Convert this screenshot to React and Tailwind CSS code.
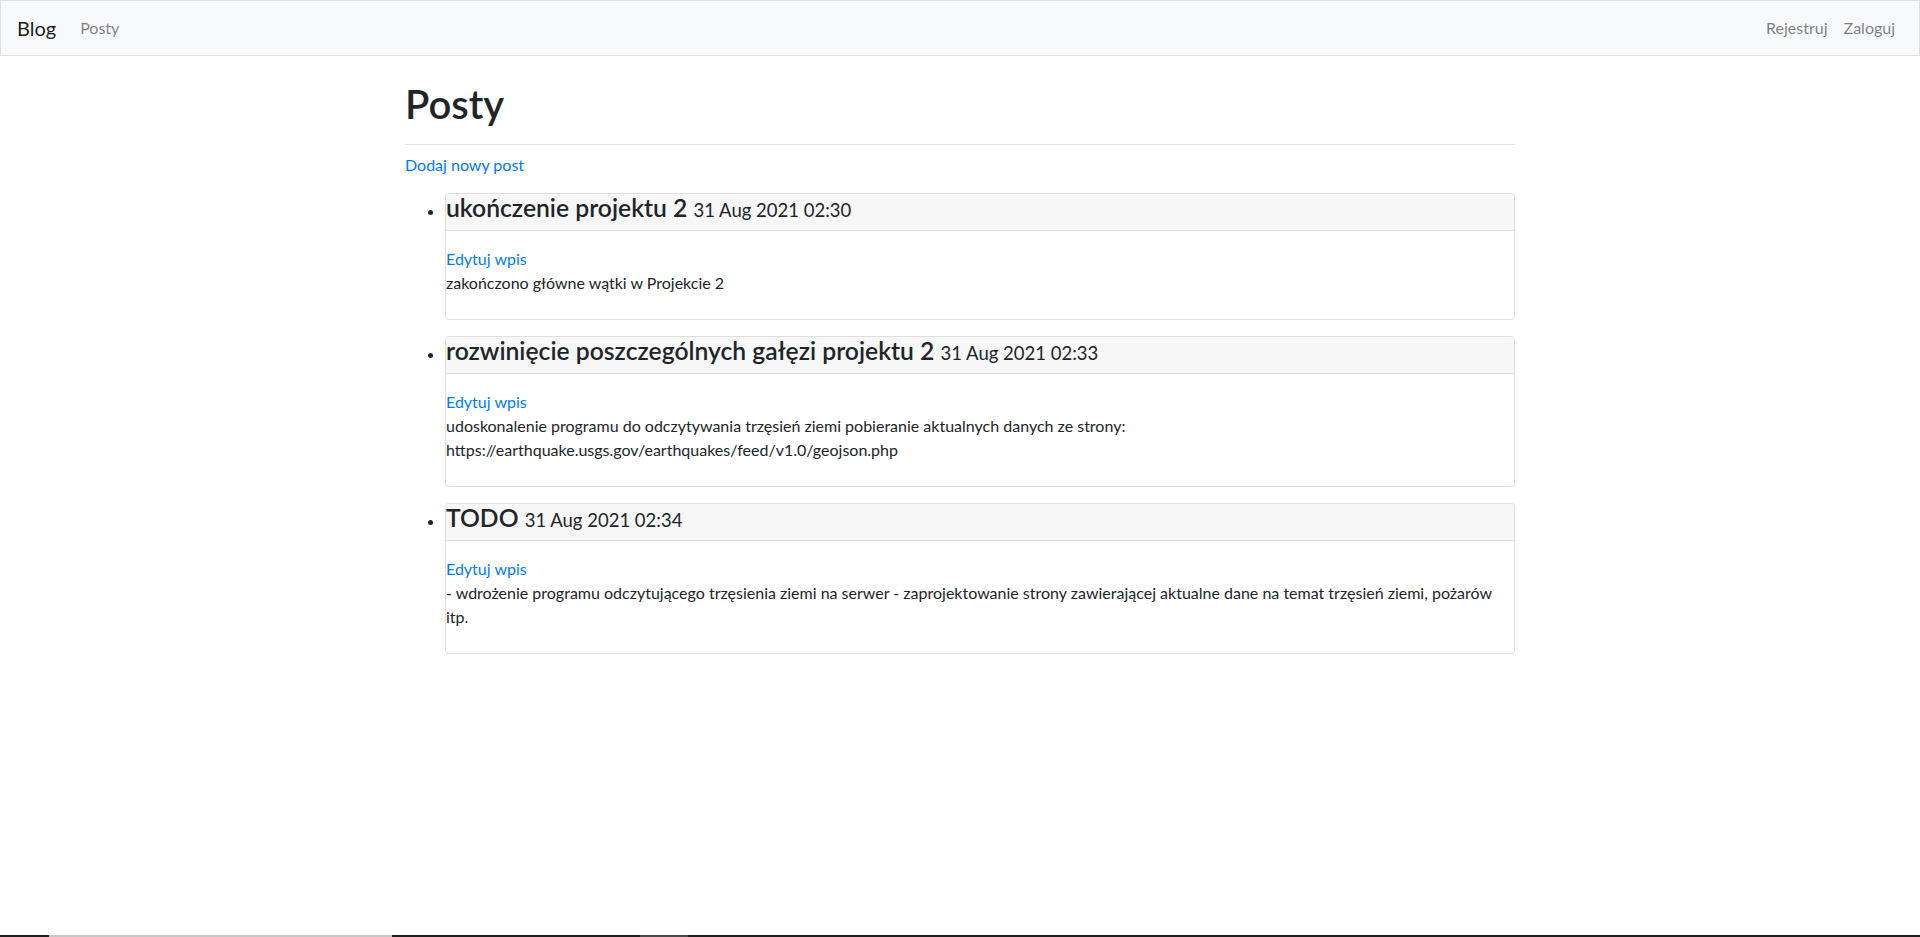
import React from "react";

const posts = [
  {
    title: "ukończenie projektu 2",
    date: "31 Aug 2021 02:30",
    lines: ["zakończono główne wątki w Projekcie 2"],
  },
  {
    title: "rozwinięcie poszczególnych gałęzi projektu 2",
    date: "31 Aug 2021 02:33",
    lines: [
      "udoskonalenie programu do odczytywania trzęsień ziemi pobieranie aktualnych danych ze strony:",
      "https://earthquake.usgs.gov/earthquakes/feed/v1.0/geojson.php",
    ],
  },
  {
    title: "TODO",
    date: "31 Aug 2021 02:34",
    lines: [
      "- wdrożenie programu odczytującego trzęsienia ziemi na serwer - zaprojektowanie strony zawierającej aktualne dane na temat trzęsień ziemi, pożarów",
      "itp.",
    ],
  },
];

export default function App() {
  return (
    <div className="min-h-screen flex flex-col bg-white text-[#212529] font-['Lato','Open_Sans',sans-serif] text-base">
      <nav className="h-[56px] flex items-center px-4 bg-[#f8f9fa] border border-[#dfe0e1]">
        <a className="text-[20px] leading-[30px] text-black/90 mr-4 cursor-pointer">Blog</a>
        <a className="px-2 leading-6 text-black/50 cursor-pointer">Posty</a>
        <div className="ml-auto flex">
          <a className="px-2 leading-6 text-black/50 cursor-pointer">Rejestruj</a>
          <a className="px-2 leading-6 text-black/50 cursor-pointer">Zaloguj</a>
        </div>
      </nav>

      <main className="w-[1140px] mx-auto px-[15px]">
        <h1 className="text-[40px] leading-[48px] font-semibold mt-6 mb-2">Posty</h1>
        <hr className="mt-4 mb-2 border-0 border-t border-black/10" />
        <a className="block leading-6 text-[#007bff] cursor-pointer">Dodaj nowy post</a>
        <ul className="list-disc pl-10 mt-4">
          {posts.map((p, i) => (
            <li key={i} className="mb-4">
              <div className="border border-[#dfdfdf] rounded overflow-hidden">
                <div className="bg-[#f7f7f7] border-b border-[#dfdfdf]">
                  <h4 className="text-[24.7px] leading-[28px] font-semibold mb-2">
                    {p.title}{" "}
                    <span className="text-[18.5px] leading-none font-normal">{p.date}</span>
                  </h4>
                </div>
                <div className="pt-4 pb-6 leading-6">
                  <a className="block text-[#007bff] cursor-pointer">Edytuj wpis</a>
                  <div className="whitespace-nowrap">
                    {p.lines.map((l, j) => (
                      <div key={j}>{l}</div>
                    ))}
                  </div>
                </div>
              </div>
            </li>
          ))}
        </ul>
      </main>

      <div className="mt-auto h-[2px] flex bg-[#1f1f1f]">
        <div className="w-[49px]" />
        <div className="w-[343px] bg-[#c6c6c6]" />
        <div className="w-[248px]" />
        <div className="w-[48px] bg-[#4a4a4a]" />
      </div>
    </div>
  );
}
